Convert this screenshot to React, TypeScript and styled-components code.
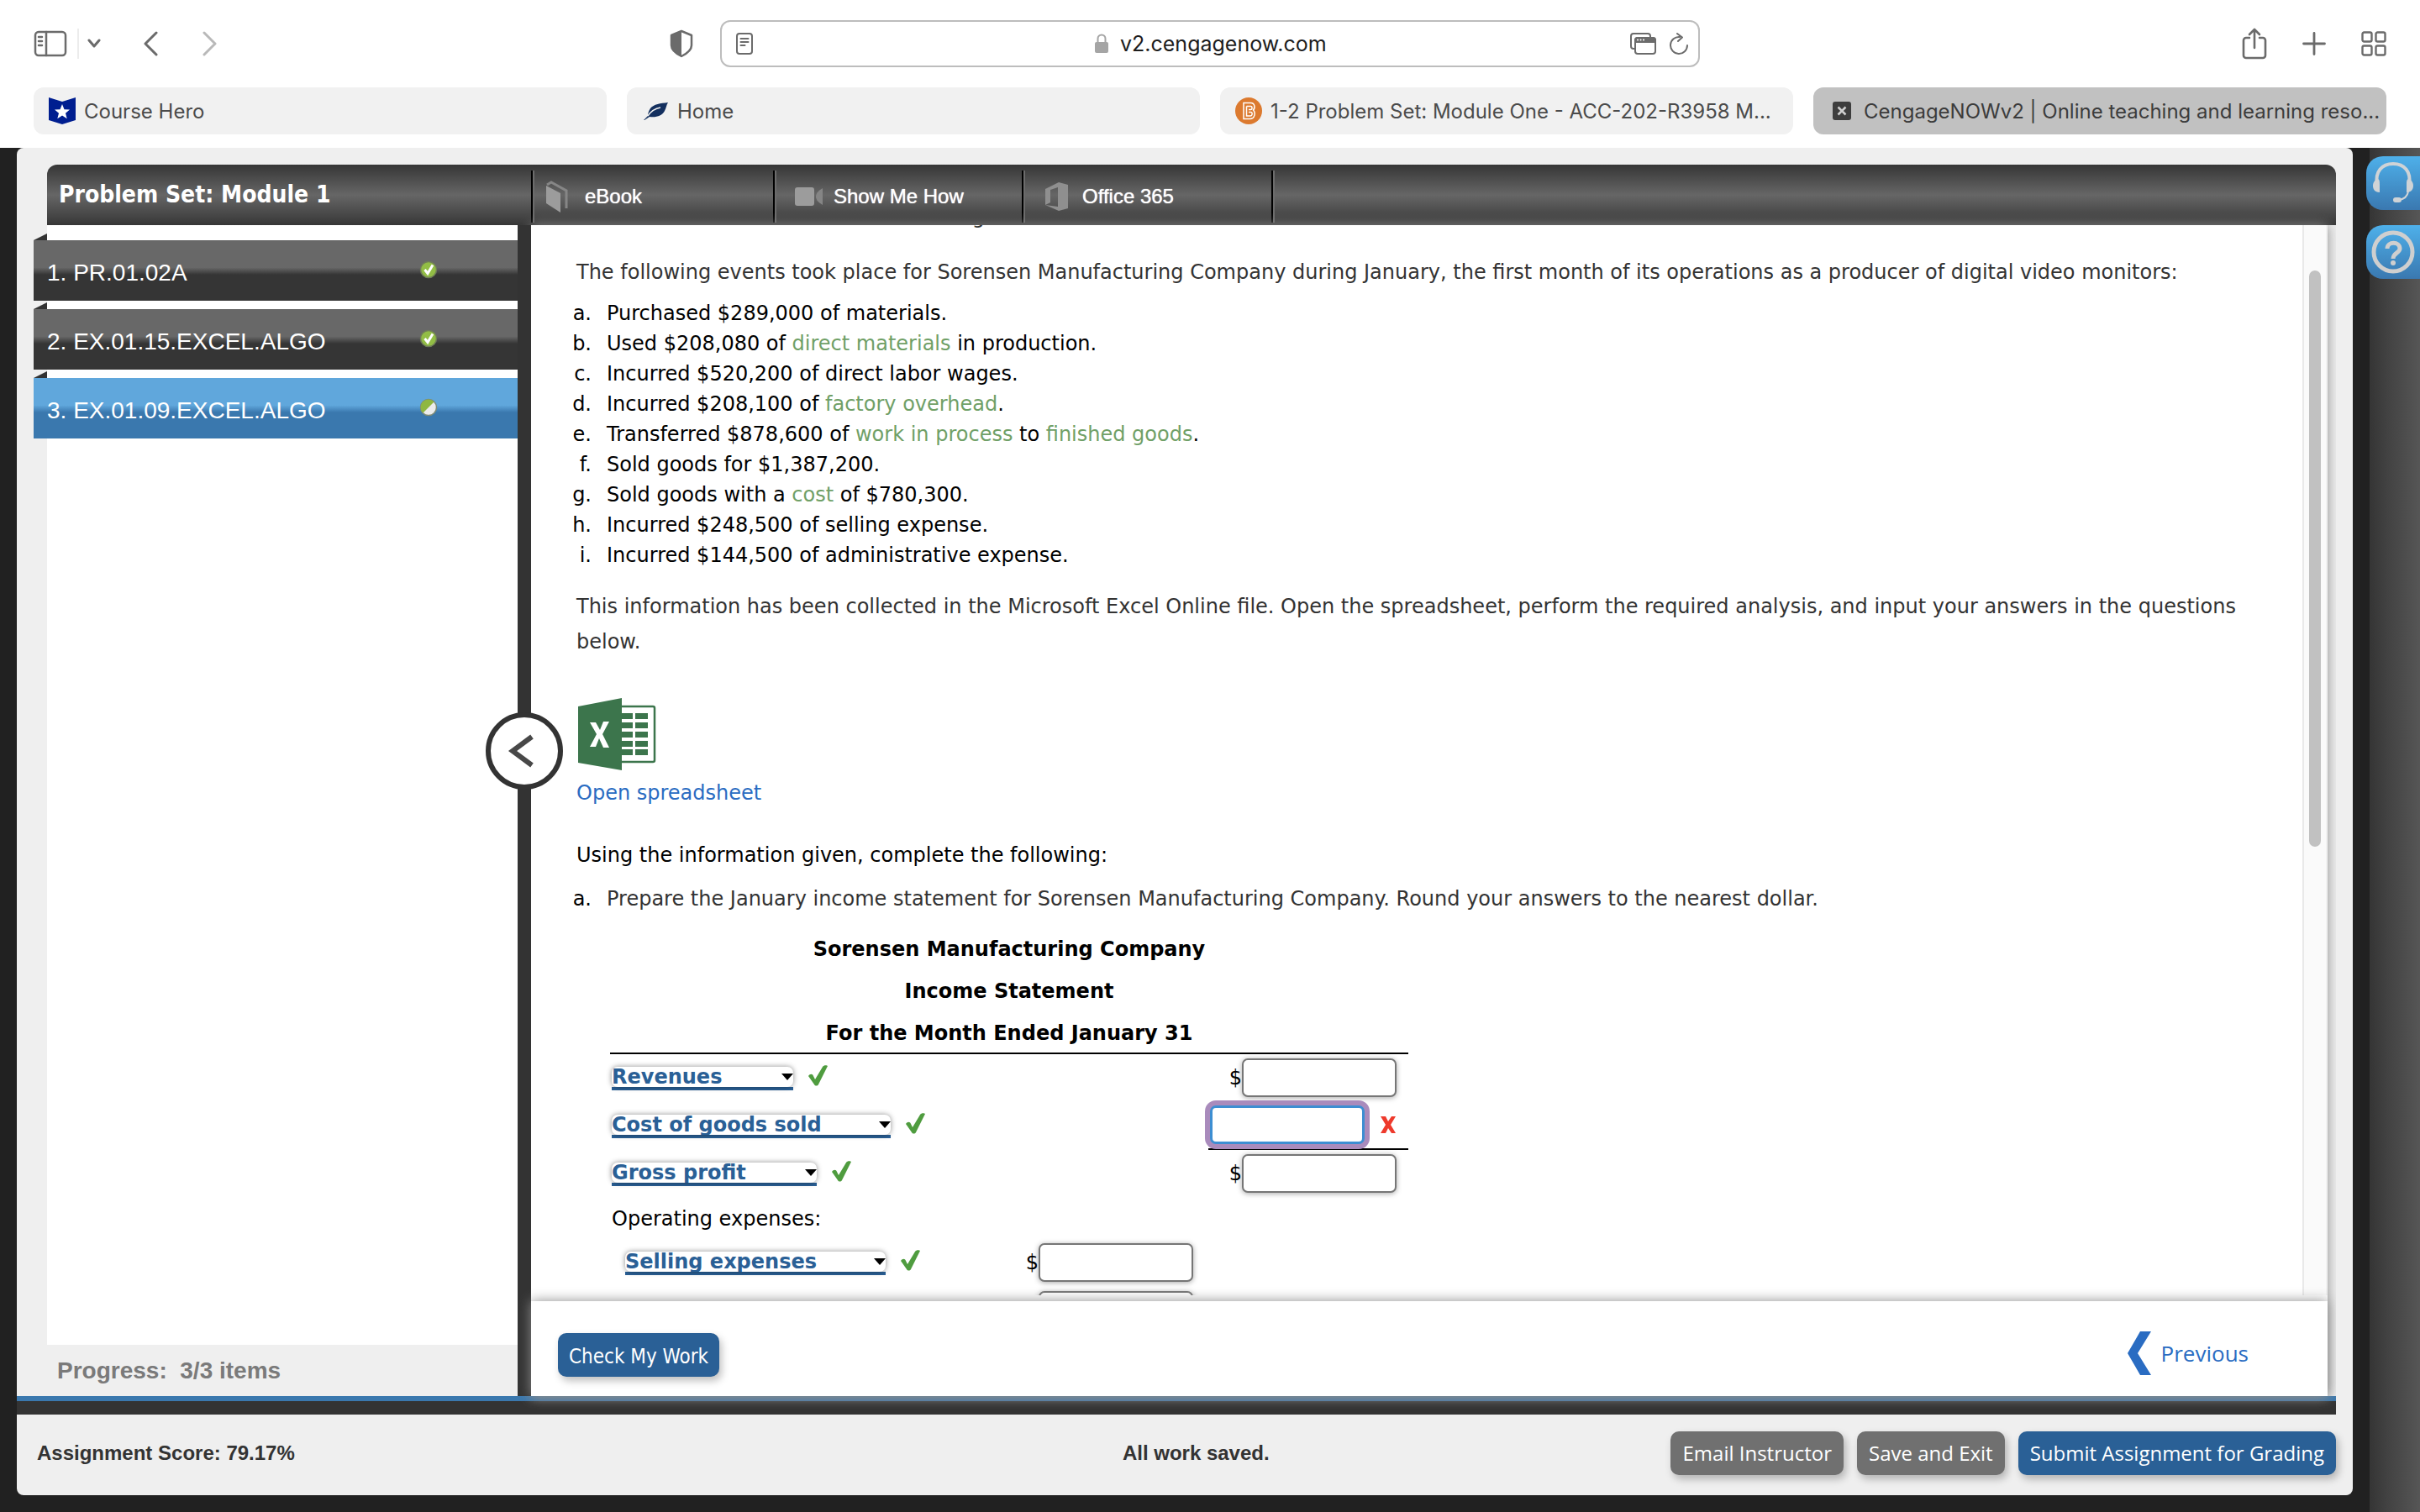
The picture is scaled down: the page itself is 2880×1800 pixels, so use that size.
import React from "react";
import styled, { createGlobalStyle, css } from "styled-components";

const GlobalStyle = createGlobalStyle`
  *, *::before, *::after { box-sizing: border-box; }
  body { margin: 0; background: #ffffff; }
  button, input, select { font: inherit; }
`;

const arial = `"Liberation Sans", Arial, sans-serif`;
const verdana = `"DejaVu Sans", Verdana, sans-serif`;
const tahoma = `"DejaVu Sans Condensed", Tahoma, sans-serif`;
const openSans = `"Open Sans", sans-serif`;
const inter = `Inter, sans-serif`;

/* ---------- Browser chrome ---------- */

const Page = styled.div`
  display: flex;
  flex-direction: column;
  height: 100vh;
  overflow: hidden;
  font-family: ${arial};
  font-size: 24px;
  color: #000;
`;

const Browser = styled.header`
  padding: 24px 40px 16px;
  background: #fff;
  font-family: ${inter};
`;

const Toolbar = styled.div`
  display: grid;
  grid-template-columns: 1fr minmax(0, 1166px) 1fr;
  align-items: center;
`;

const ToolGroup = styled.div<{ $end?: boolean }>`
  display: flex;
  align-items: center;
  justify-content: ${(p) => (p.$end ? "flex-end" : "flex-start")};
  gap: ${(p) => (p.$end ? "42px" : "0")};
  padding-right: ${(p) => (p.$end ? "0" : "32px")};
`;

const ToolButton = styled.button<{ $left?: number }>`
  display: flex;
  padding: 0;
  margin-left: ${(p) => p.$left || 0}px;
  border: 0;
  background: none;
  color: #6b6b6b;
  &:disabled { color: #b9b9b9; }
`;

const ToolDivider = styled.span`
  width: 2px;
  height: 36px;
  margin-left: 12px;
  background: #ececec;
`;

const Spacer = styled.span`
  flex: 1;
`;

const AddressBar = styled.div`
  display: flex;
  align-items: center;
  height: 56px;
  padding: 0 12px 0 17px;
  border: 2px solid #bdbdbd;
  border-radius: 12px;
`;

const AddressCenter = styled.label`
  display: flex;
  flex: 1;
  align-items: center;
  justify-content: center;
  gap: 14px;
  padding-left: 52px;
`;

const AddressInput = styled.input`
  width: 252px;
  padding: 0;
  border: 0;
  outline: 0;
  background: none;
  font-size: 25px;
  color: #1d1d1d;
`;

const TabStrip = styled.nav`
  display: grid;
  grid-template-columns: repeat(4, minmax(0, 1fr));
  gap: 24px;
  margin-top: 24px;
`;

const Tab = styled.a<{ $active?: boolean }>`
  display: flex;
  align-items: center;
  gap: 10px;
  height: 56px;
  padding: 0 8px 0 18px;
  border-radius: 12px;
  background: ${(p) => (p.$active ? "#c1c1c1" : "#f1f1f1")};
  color: ${(p) => (p.$active ? "#3c3c3c" : "#4b4b4b")};
  text-decoration: none;
  white-space: nowrap;
  overflow: hidden;
  svg { flex: none; }
`;

/* ---------- Application frame ---------- */

const Workspace = styled.div`
  display: flex;
  flex: 1;
  min-height: 0;
`;

const Frame = styled.div`
  display: flex;
  flex: 1;
  min-width: 0;
  padding: 0 20px 20px;
  background: #212121;
`;

const Panel = styled.div`
  display: flex;
  flex-direction: column;
  flex: 1;
  min-width: 0;
  padding: 20px 20px 0 0;
  border-radius: 8px;
  background: #efefef;
`;

const HeaderBar = styled.div`
  display: flex;
  height: 72px;
  margin-left: 36px;
  border-radius: 12px 12px 0 0;
  background: linear-gradient(#363636, #666 50%, #373737);
  color: #fff;
`;

const Title = styled.h1`
  width: 576px;
  margin: 0;
  padding-left: 14px;
  font: 700 28px/72px ${tahoma};
`;

const HeaderTool = styled.button<{ $width: number; $indent: number }>`
  display: flex;
  align-items: center;
  gap: 12px;
  width: ${(p) => p.$width}px;
  margin: 7px 0 3px;
  padding: 0 0 0 ${(p) => p.$indent}px;
  border: 0;
  border-left: 2px solid #000;
  box-shadow: inset 2px 0 #6c6c6c;
  background: none;
  color: #fff;
  text-shadow: 0 0 1px #fff;
`;

const HeaderEnd = styled.span`
  width: 4px;
  margin: 7px 0 3px;
  border-left: 2px solid #000;
  border-right: 2px solid #6c6c6c;
`;

const Main = styled.main`
  display: flex;
  flex: 1;
  min-height: 0;
  clip-path: inset(-14px 0 -22px 0);
`;

const Sidebar = styled.aside`
  display: flex;
  flex-direction: column;
  width: 596px;
  padding-left: 36px;
`;

const ItemList = styled.ul`
  display: flex;
  flex-direction: column;
  flex: 1;
  gap: 2px;
  margin: 0;
  padding: 10px 0 0;
  list-style: none;
  background: #fff;
`;

const Fold = styled.svg`
  display: block;
`;

const ItemRow = styled.li`
  margin-left: -16px;
`;

const ItemLink = styled.a<{ $active?: boolean }>`
  display: flex;
  align-items: center;
  justify-content: space-between;
  height: 72px;
  padding: 0 95px 2px 16px;
  font-size: 28px;
  line-height: 32px;
  color: #fff;
  text-decoration: none;
  background: ${(p) =>
    p.$active
      ? "linear-gradient(#60a7dc 45%, #3a78ae 57%)"
      : "linear-gradient(#686868 45%, #353535 57%)"};
  span { padding-top: 8px; }
`;

const Progress = styled.div`
  height: 61px;
  padding-left: 12px;
  background: #efefef;
  color: #7a7a7a;
  font-weight: 700;
  font-size: 28px;
  line-height: 61px;
  white-space: pre;
`;

const Divider = styled.div`
  position: relative;
  z-index: 1;
  width: 16px;
  background: #333;
`;

const CollapseButton = styled.button`
  position: absolute;
  top: 580px;
  left: -38px;
  display: flex;
  align-items: center;
  justify-content: center;
  width: 92px;
  height: 92px;
  padding: 0 8px 0 0;
  border: 6px solid #333;
  border-radius: 50%;
  background: #fff;
`;

const Content = styled.section`
  display: flex;
  flex-direction: column;
  flex: 1;
  min-width: 0;
  margin-right: 10px;
  background: #fff;
  box-shadow: 0 0 14px #8c8c8c;
`;

const ScrollRow = styled.div`
  display: flex;
  flex: 1;
  min-height: 0;
  padding-bottom: 7px;
`;

const Scroller = styled.div`
  flex: 1;
  min-width: 0;
  overflow: hidden;
  padding: 0 40px 0 54px;
  font-family: ${verdana};
  font-size: 24px;
  line-height: 42px;
`;

const ScrollTrack = styled.div`
  width: 30px;
  padding: 54px 6px 0;
  border-left: 2px solid #e9e9e9;
  border-right: 2px solid #f1f1f1;
  background: #fafafa;
`;

const ScrollThumb = styled.div`
  height: 686px;
  border-radius: 8px;
  background: #c1c1c1;
`;

/* ---------- Problem text ---------- */

const Problem = styled.article`
  margin-top: -31px;
`;

const Paragraph = styled.p<{ $dark?: boolean; $gap?: number }>`
  margin: 0 0 ${(p) => p.$gap ?? 24}px;
  color: ${(p) => (p.$dark ? "#000" : "#333")};
`;

const Steps = styled.ol<{ $lineHeight?: number; $gap?: number }>`
  margin: 0 0 ${(p) => p.$gap ?? 0}px -6px;
  padding: 0;
  list-style: none;
  line-height: ${(p) => p.$lineHeight ?? 36}px;
`;

const Step = styled.li`
  display: grid;
  grid-template-columns: 24px 1fr;
  gap: 18px;
`;

const Marker = styled.span`
  text-align: right;
`;

const Term = styled.a`
  color: #70a067;
  text-decoration: none;
`;

const Muted = styled.span`
  color: #333;
`;

const SheetLink = styled.a`
  display: flex;
  flex-direction: column;
  align-items: flex-start;
  gap: 6px;
  margin: 46px 0 32px;
  color: #2a6cc2;
  text-decoration: none;
`;

/* ---------- Income statement ---------- */

const Statement = styled.table`
  width: 950px;
  margin: 12px 0 0 40px;
  border-collapse: collapse;
  table-layout: fixed;
`;

const Col = styled.col<{ $width: number }>`
  width: ${(p) => p.$width}px;
`;

const TitleCell = styled.th<{ $rule?: boolean }>`
  height: 50px;
  padding: 4px 0 0;
  line-height: 46px;
  border-bottom: ${(p) => (p.$rule ? "2px solid #000" : "0")};
`;

const LabelCell = styled.th<{ $indent?: boolean; $text?: boolean }>`
  height: ${(p) => (p.$text ? 49 : 57)}px;
  padding: ${(p) => (p.$text ? 2 : 0)}px 0 0 ${(p) => (p.$indent ? 18 : 2)}px;
  text-align: left;
  font-weight: 400;
  line-height: 46px;
`;

const AmountCell = styled.td<{ $rule?: boolean; $right: number }>`
  padding: 0 ${(p) => p.$right}px 0 0;
  border-bottom: ${(p) => (p.$rule ? "2px solid #000" : "0")};
`;

const AmountField = styled.label`
  display: flex;
  align-items: center;
  justify-content: flex-end;
`;

const AmountInput = styled.input<{ $focus?: boolean }>`
  width: 184px;
  height: 46px;
  padding: 0 8px;
  outline: 0;
  border: 2px solid #767676;
  border-radius: 7px;
  background: #fff;
  box-shadow: 0 1px 6px rgba(0, 0, 0, 0.35);
  ${(p) =>
    p.$focus &&
    css`
      margin-right: 18px;
      border: 3px solid #3d8ed2;
      box-shadow: 0 0 0 6px #a98bbc;
    `}
`;

const ChoiceRow = styled.div`
  display: flex;
  align-items: flex-start;
  gap: 18px;
`;

const SelectBox = styled.span<{ $width: number }>`
  display: grid;
  align-items: center;
  width: ${(p) => p.$width}px;
  margin-top: 2px;
  border-bottom: 4px solid #2a6096;
  svg { grid-area: 1 / 1; justify-self: end; pointer-events: none; }
`;

const Select = styled.select`
  grid-area: 1 / 1;
  width: 100%;
  height: 24px;
  padding: 0;
  appearance: none;
  border: 0;
  border-radius: 7px;
  outline: 0;
  background: #fff;
  box-shadow: 0 0 6px rgba(0, 0, 0, 0.45);
  color: #2a6096;
  font-weight: 700;
  line-height: 24px;
`;

/* ---------- Bottom bars ---------- */

const ActionBar = styled.div`
  position: relative;
  z-index: 2;
  display: flex;
  align-items: center;
  justify-content: space-between;
  height: 113px;
  padding: 38px 94px 23px 32px;
  background: #fff;
  box-shadow: 0 0 14px #8c8c8c;
`;

const PushButton = styled.button<{ $primary?: boolean; $face?: string }>`
  height: 52px;
  padding: ${(p) => (p.$face ? "4px 13px 0" : "0 14px")};
  border: 0;
  border-radius: 10px;
  background: ${(p) => (p.$primary ? "#2a6096" : "#707070")};
  box-shadow: 3px 5px 10px rgba(0, 0, 0, 0.25);
  color: #fff;
  font-family: ${(p) => p.$face || openSans};
  font-size: 24px;
  font-weight: 400;
  line-height: 48px;
  white-space: nowrap;
`;

const PreviousLink = styled.a`
  display: flex;
  align-items: center;
  gap: 12px;
  padding-bottom: 4px;
  color: #2a6cc2;
  font: 400 26px/40px ${openSans};
  text-decoration: none;
`;

const BaseLine = styled.div`
  height: 22px;
  background: linear-gradient(#3a78ae 6px, #333 6px);
`;

const Footer = styled.footer`
  display: grid;
  grid-template-columns: 47% auto 1fr;
  gap: 6px;
  align-items: center;
  height: 96px;
  padding: 0 0 4px 24px;
  color: #333;
  font-weight: 700;
`;

const FooterActions = styled.div`
  display: flex;
  justify-content: flex-end;
  gap: 16px;
`;

const SideRail = styled.aside`
  display: flex;
  flex-direction: column;
  gap: 18px;
  width: 60px;
  padding-top: 10px;
  background: linear-gradient(90deg, #353535, #424242 35%, #565656);
`;

const RailButton = styled.button`
  display: flex;
  align-items: center;
  justify-content: center;
  width: 64px;
  height: 64px;
  margin-left: -4px;
  padding: 0;
  border: 0;
  border-radius: 20px 0 0 20px;
  background: linear-gradient(#4eb0ea, #3a78b0);
`;

/* ---------- Drawings ---------- */

const line = { fill: "none", stroke: "currentColor", strokeLinecap: "round", strokeLinejoin: "round" } as const;

const SidebarIcon = () => (
  <svg width="40" height="32" viewBox="0 0 40 32" {...line} strokeWidth="2.5">
    <rect x="2" y="2" width="36" height="28" rx="4" />
    <path d="M15 2v28M6 8h4M6 13h4M6 18h4" />
  </svg>
);
const SmallChevron = () => (
  <svg width="16" height="12" viewBox="0 0 16 12" {...line} strokeWidth="3"><path d="M2 2l6 7 6-7" /></svg>
);
const Arrow = ({ flip }: { flip?: boolean }) => (
  <svg width="18" height="30" viewBox="0 0 18 30" {...line} strokeWidth="3">
    <path d={flip ? "M2 2l13 13L2 28" : "M16 2L3 15l13 13"} />
  </svg>
);
const ShieldIcon = () => (
  <svg width="28" height="34" viewBox="0 0 28 34">
    <path d="M14 2l12 5v12c0 6-6 10-12 13C8 29 2 25 2 19V7z" fill="none" stroke="currentColor" strokeWidth="2.5" strokeLinejoin="round" />
    <path d="M14 2v30C8 29 2 25 2 19V7z" fill="currentColor" />
  </svg>
);
const ReaderIcon = () => (
  <svg width="20" height="26" viewBox="0 0 20 26" {...line} strokeWidth="2">
    <rect x="1" y="1" width="18" height="24" rx="3" /><path d="M5.500 7h9M5.500 11h9M5.500 15h5" />
  </svg>
);
const LockIcon = () => (
  <svg width="16" height="24" viewBox="0 0 16 24">
    <path d="M3.500 11V6a4.500 4.500 0 0 1 9 0v5" fill="none" stroke="#a5a5a5" strokeWidth="2" />
    <rect y="10" width="16" height="13" rx="2" fill="#a5a5a5" />
  </svg>
);
const WindowsIcon = () => (
  <svg width="31" height="26" viewBox="0 0 31 26" {...line} strokeWidth="2">
    <path d="M6 19H4a3 3 0 0 1-3-3V4a3 3 0 0 1 3-3h17a3 3 0 0 1 3 3v2" />
    <rect x="6" y="6" width="24" height="19" rx="3" />
    <path d="M6 11V9a3 3 0 0 1 3-3h18a3 3 0 0 1 3 3v2z" fill="currentColor" />
    <path d="M9 8.500h.1M12.500 8.500h.1M16 8.500h.1" stroke="#fff" />
  </svg>
);
const ReloadIcon = () => (
  <svg width="22" height="26" viewBox="0 0 22 26" {...line} strokeWidth="2">
    <path d="M12 5a10 10 0 1 0 9 10M9 1l6 4.500-5 4.500" />
  </svg>
);
const ShareIcon = () => (
  <svg width="30" height="38" viewBox="0 0 30 38" {...line} strokeWidth="2.600">
    <path d="M9 12H5a3 3 0 0 0-3 3v18a3 3 0 0 0 3 3h20a3 3 0 0 0 3-3V15a3 3 0 0 0-3-3h-4M15 24V2M9 8l6-6 6 6" />
  </svg>
);
const PlusIcon = () => (
  <svg width="28" height="28" viewBox="0 0 28 28" {...line} strokeWidth="2.800"><path d="M14 1.500v25M1.500 14h25" /></svg>
);
const GridIcon = () => (
  <svg width="30" height="30" viewBox="0 0 30 30" {...line} strokeWidth="2.400">
    <rect x="1.500" y="1.500" width="11" height="11" rx="2" /><rect x="17.500" y="1.500" width="11" height="11" rx="2" />
    <rect x="1.500" y="17.500" width="11" height="11" rx="2" /><rect x="17.500" y="17.500" width="11" height="11" rx="2" />
  </svg>
);

const HeroIcon = () => (
  <svg width="32" height="32" viewBox="0 0 32 32">
    <path d="M0 0l16 5L32 0v27l-16 5-16-5z" fill="#001e90" />
    <path d="M16 8l2.500 6.200 6.500.4-5 4.200 1.700 6.400L16 21.600l-5.700 3.600 1.700-6.400-5-4.200 6.500-.4z" fill="#fff" />
  </svg>
);
const FeatherIcon = () => (
  <svg width="32" height="32" viewBox="0 0 32 32">
    <path d="M31 6c-9 1-17 2-21 7-2 3-3 6-3 9l-5 5 1 0 6-4c8 1 15-1 18-7 2-4 2-7 4-10z" fill="#14305f" />
    <path d="M7 22c4-6 9-9 15-10" fill="none" stroke="#f1f1f1" strokeWidth="1.500" />
  </svg>
);
const BrightspaceIcon = () => (
  <svg width="32" height="32" viewBox="0 0 32 32">
    <circle cx="16" cy="16" r="16" fill="#dc7a2f" />
    <path d="M10 6.500h8.500c5 0 5.500 6 3 8.500 3 3 2 10.500-4 10.500H10zM13.500 10.500h5c2 0 2 4 0 4H16M16 17.500h2.500c2.500 0 2 4.500-.5 4.500h-4.500V10.500" fill="none" stroke="#fff" strokeWidth="1.500" />
  </svg>
);
const CloseTabIcon = () => (
  <svg width="32" height="32" viewBox="0 0 32 32">
    <rect x="5" y="5" width="22" height="22" rx="3" fill="#3d3d3d" />
    <path d="M11.500 11.500l9 9M20.500 11.500l-9 9" stroke="#cfcfcf" strokeWidth="2.500" />
  </svg>
);

const BookIcon = () => (
  <svg width="36" height="38" viewBox="0 0 36 38">
    <path d="M2 6l17 9v23L2 27z" fill="#9c9c9c" />
    <path d="M3 5l5-3 18 10v21" fill="none" stroke="#868686" strokeWidth="3" />
  </svg>
);
const CameraIcon = () => (
  <svg width="36" height="38" viewBox="0 0 36 38">
    <rect x="2" y="8" width="23" height="22" rx="3" fill="#9c9c9c" />
    <path d="M35 9v20c-5-3-8-6-8-10s3-7 8-10z" fill="#858585" />
  </svg>
);
const OfficeIcon = () => (
  <svg width="36" height="38" viewBox="0 0 36 38">
    <path d="M4 10l16-8 11 3v28l-11 3L4 29l15 2V8l-9 3v15l-6 3z" fill="#8f8f8f" />
  </svg>
);

const DoneIcon = () => (
  <svg width="22" height="22" viewBox="0 0 22 22">
    <circle cx="11" cy="11" r="9.500" fill="#92bd45" stroke="#6f7d58" strokeWidth="1.500" />
    <path d="M6.500 11l3.500 4.500L16 5.500" fill="none" stroke="#fff" strokeWidth="3" />
  </svg>
);
const PartialIcon = () => (
  <svg width="22" height="22" viewBox="0 0 22 22">
    <circle cx="11" cy="11" r="9.500" fill="#ececec" stroke="#7d8a75" strokeWidth="1.500" />
    <path d="M17.500 4.500A9.200 9.200 0 1 0 4.500 17.500z" fill="#8fb740" />
  </svg>
);

const ExcelIcon = () => (
  <svg width="96" height="86" viewBox="0 0 96 86">
    <rect x="50" y="10" width="43" height="66" rx="2" fill="#fff" stroke="#3c754c" strokeWidth="2.500" />
    <g fill="#3c754c">
      {[18, 29, 40, 51, 61].map((y) => (
        <React.Fragment key={y}>
          <rect x="54" y={y} width="13" height="7" /><rect x="70" y={y} width="15" height="7" />
        </React.Fragment>
      ))}
    </g>
    <path d="M2 10L54 0v86L2 77z" fill="#3c754c" />
    <path d="M16 29l7 0 5 9 4-10 7 0-8 15 8 16-7 0-5-11-4 10-7 0 8-15z" fill="#fff" />
  </svg>
);

const CollapseArrow = () => (
  <svg width="32" height="40" viewBox="0 0 32 40" fill="none" stroke="#484848" strokeWidth="6"><path d="M29 3L6 20l23 17" /></svg>
);
const PreviousArrow = () => (
  <svg width="28" height="52" viewBox="0 0 28 52"><path d="M15 0h13L12 26l16 26H15L0 26z" fill="#2a6cc2" /></svg>
);
const CheckMark = () => (
  <svg width="24" height="26" viewBox="0 0 24 26"><path d="M0 13c2-3 5-3 6 0l2 4L17 2c1-2 5-2 6-1L12 23c-1 2-4 2-5 0z" fill="#4f9c3f" /></svg>
);
const WrongMark = () => (
  <svg width="20" height="22" viewBox="0 0 20 22">
    <path d="M1 1h6l3 6 4-6h5l-6 10 6 10h-5l-4-6-3 6H1l6-10z" fill="#ee3a2c" />
  </svg>
);
const DropArrow = () => (
  <svg width="14" height="8" viewBox="0 0 14 8"><path d="M0 0h14L7 8z" fill="#000" /></svg>
);
const HeadsetIcon = () => (
  <svg width="50" height="52" viewBox="0 0 50 52" fill="none" stroke="#cfd3d6">
    <path d="M6 28C3 12 12 3 25 3s22 9 19 25" strokeWidth="4" />
    <path d="M4.500 22c4-2 4.500 0 4.500 6v9c-6 0-8-4-8-8 0-3 1-5 3.500-7zM45.500 22c-4-2-4.500 0-4.500 6v9c6 0 8-4 8-8 0-3-1-5-3.500-7z" fill="#cfd3d6" stroke="none" />
    <path d="M43 36c-1 6-5 9-11 10" strokeWidth="2" /><rect x="25" y="43" width="10" height="6" rx="3" fill="#cfd3d6" stroke="none" />
  </svg>
);
const HelpIcon = () => (
  <svg width="52" height="52" viewBox="0 0 52 52" fill="none" stroke="#cfcfcf">
    <circle cx="26" cy="26" r="23" strokeWidth="5" />
    <path d="M19 22c0-9 15-9 15 0 0 5-8 5-8 12" strokeWidth="5" /><circle cx="26" cy="39" r="3" fill="#cfcfcf" stroke="none" />
  </svg>
);

/* ---------- Composition ---------- */

const tabs = [
  { label: "Course Hero", icon: <HeroIcon /> },
  { label: "Home", icon: <FeatherIcon /> },
  { label: "1-2 Problem Set: Module One - ACC-202-R3958 M...", icon: <BrightspaceIcon /> },
  { label: "CengageNOWv2 | Online teaching and learning reso...", icon: <CloseTabIcon />, active: true },
];

const tools = [
  { label: "eBook", icon: <BookIcon />, width: 288, indent: 14 },
  { label: "Show Me How", icon: <CameraIcon />, width: 296, indent: 22 },
  { label: "Office 365", icon: <OfficeIcon />, width: 297, indent: 22 },
];

const items = [
  { label: "1. PR.01.02A", icon: <DoneIcon /> },
  { label: "2. EX.01.15.EXCEL.ALGO", icon: <DoneIcon /> },
  { label: "3. EX.01.09.EXCEL.ALGO", icon: <PartialIcon />, active: true },
];

const events: React.ReactNode[] = [
  <>Purchased $289,000 of materials.</>,
  <>Used $208,080 of <Term href="#">direct materials</Term> in production.</>,
  <>Incurred $520,200 of direct labor wages.</>,
  <>Incurred $208,100 of <Term href="#">factory overhead</Term>.</>,
  <>Transferred $878,600 of <Term href="#">work in process</Term> to <Term href="#">finished goods</Term>.</>,
  <>Sold goods for $1,387,200.</>,
  <>Sold goods with a <Term href="#">cost</Term> of $780,300.</>,
  <>Incurred $248,500 of selling expense.</>,
  <>Incurred $144,500 of administrative expense.</>,
];

const Choice = ({ value, width, name }: { value: string; width: number; name: string }) => (
  <ChoiceRow>
    <SelectBox $width={width}>
      <Select aria-label={name} defaultValue={value}><option>{value}</option></Select>
      <DropArrow />
    </SelectBox>
    <CheckMark />
  </ChoiceRow>
);

const Amount = ({ name, dollar, wrong }: { name: string; dollar?: boolean; wrong?: boolean }) => (
  <AmountField>
    {dollar && "$"}
    <AmountInput aria-label={name} $focus={wrong} />
    {wrong && <WrongMark />}
  </AmountField>
);

export default function App() {
  return (
    <Page>
      <GlobalStyle />
      <Browser>
        <Toolbar>
          <ToolGroup>
            <ToolButton aria-label="Sidebar"><SidebarIcon /></ToolButton>
            <ToolDivider />
            <ToolButton aria-label="Tab groups" $left={10}><SmallChevron /></ToolButton>
            <ToolButton aria-label="Back" $left={50}><Arrow /></ToolButton>
            <ToolButton aria-label="Forward" $left={53} disabled><Arrow flip /></ToolButton>
            <Spacer />
            <ToolButton aria-label="Privacy report"><ShieldIcon /></ToolButton>
          </ToolGroup>
          <AddressBar>
            <ToolButton aria-label="Reader"><ReaderIcon /></ToolButton>
            <AddressCenter>
              <LockIcon />
              <AddressInput aria-label="Address" defaultValue="v2.cengagenow.com" />
            </AddressCenter>
            <ToolButton aria-label="Windows"><WindowsIcon /></ToolButton>
            <ToolButton aria-label="Reload" $left={16}><ReloadIcon /></ToolButton>
          </AddressBar>
          <ToolGroup $end>
            <ToolButton aria-label="Share"><ShareIcon /></ToolButton>
            <ToolButton aria-label="New tab"><PlusIcon /></ToolButton>
            <ToolButton aria-label="Tab overview"><GridIcon /></ToolButton>
          </ToolGroup>
        </Toolbar>
        <TabStrip>
          {tabs.map((t) => (
            <Tab key={t.label} href="#" $active={t.active}>{t.icon}{t.label}</Tab>
          ))}
        </TabStrip>
      </Browser>

      <Workspace>
        <Frame>
          <Panel>
            <HeaderBar>
              <Title>Problem Set: Module 1</Title>
              {tools.map((t) => (
                <HeaderTool key={t.label} $width={t.width} $indent={t.indent}>{t.icon}{t.label}</HeaderTool>
              ))}
              <HeaderEnd />
            </HeaderBar>

            <Main>
              <Sidebar>
                <ItemList>
                  {items.map((i) => (
                    <ItemRow key={i.label}>
                      <Fold width="16" height="8" viewBox="0 0 16 8"><path d="M0 8L16 0v8z" fill="#333" /></Fold>
                      <ItemLink href="#" $active={i.active}><span>{i.label}</span>{i.icon}</ItemLink>
                    </ItemRow>
                  ))}
                </ItemList>
                <Progress>{"Progress:  3/3 items"}</Progress>
              </Sidebar>

              <Divider>
                <CollapseButton aria-label="Collapse list"><CollapseArrow /></CollapseButton>
              </Divider>

              <Content>
                <ScrollRow>
                  <Scroller>
                    <Problem>
                      <Paragraph>Financial Statements of a Manufacturing Firm</Paragraph>
                      <Paragraph $gap={10}>
                        The following events took place for Sorensen Manufacturing Company during January, the first
                        month of its operations as a producer of digital video monitors:
                      </Paragraph>
                      <Steps $gap={22}>
                        {events.map((e, i) => (
                          <Step key={i}><Marker>{"abcdefghi"[i]}.</Marker><span>{e}</span></Step>
                        ))}
                      </Steps>
                      <Paragraph $gap={0}>
                        This information has been collected in the Microsoft Excel Online file. Open the spreadsheet,
                        perform the required analysis, and input your answers in the questions below.
                      </Paragraph>
                      <SheetLink href="#"><ExcelIcon />Open spreadsheet</SheetLink>
                      <Paragraph $dark $gap={10}>Using the information given, complete the following:</Paragraph>
                      <Steps $lineHeight={42}>
                        <Step>
                          <Marker>a.</Marker>
                          <Muted>
                            Prepare the January income statement for Sorensen Manufacturing Company. Round your answers
                            to the nearest dollar.
                          </Muted>
                        </Step>
                      </Steps>
                      <Statement>
                        <colgroup><Col $width={494} /><Col $width={218} /><Col $width={238} /></colgroup>
                        <thead>
                          <tr><TitleCell colSpan={3}>Sorensen Manufacturing Company</TitleCell></tr>
                          <tr><TitleCell colSpan={3}>Income Statement</TitleCell></tr>
                          <tr><TitleCell colSpan={3} $rule>For the Month Ended January 31</TitleCell></tr>
                        </thead>
                        <tbody>
                          <tr>
                            <LabelCell scope="row"><Choice name="Line 1" value="Revenues" width={216} /></LabelCell>
                            <td />
                            <AmountCell $right={14}><Amount name="Revenues amount" dollar /></AmountCell>
                          </tr>
                          <tr>
                            <LabelCell scope="row"><Choice name="Line 2" value="Cost of goods sold" width={332} /></LabelCell>
                            <td />
                            <AmountCell $right={14} $rule><Amount name="Cost of goods sold amount" wrong /></AmountCell>
                          </tr>
                          <tr>
                            <LabelCell scope="row"><Choice name="Line 3" value="Gross profit" width={244} /></LabelCell>
                            <td />
                            <AmountCell $right={14}><Amount name="Gross profit amount" dollar /></AmountCell>
                          </tr>
                          <tr>
                            <LabelCell scope="row" $text>Operating expenses:</LabelCell>
                            <td />
                            <td />
                          </tr>
                          <tr>
                            <LabelCell scope="row" $indent><Choice name="Line 4" value="Selling expenses" width={310} /></LabelCell>
                            <AmountCell $right={18}><Amount name="Selling expenses amount" dollar /></AmountCell>
                            <td />
                          </tr>
                          <tr>
                            <LabelCell scope="row" $indent />
                            <AmountCell $right={18}><Amount name="Administrative expenses amount" /></AmountCell>
                            <td />
                          </tr>
                        </tbody>
                      </Statement>
                    </Problem>
                  </Scroller>
                  <ScrollTrack><ScrollThumb /></ScrollTrack>
                </ScrollRow>
                <ActionBar>
                  <PushButton $primary $face={tahoma}>Check My Work</PushButton>
                  <PreviousLink href="#"><PreviousArrow />Previous</PreviousLink>
                </ActionBar>
              </Content>
            </Main>
            <BaseLine />
            <Footer>
              <span>Assignment Score: 79.17%</span>
              <span>All work saved.</span>
              <FooterActions>
                <PushButton>Email Instructor</PushButton>
                <PushButton>Save and Exit</PushButton>
                <PushButton $primary>Submit Assignment for Grading</PushButton>
              </FooterActions>
            </Footer>
          </Panel>
        </Frame>
        <SideRail>
          <RailButton aria-label="Support"><HeadsetIcon /></RailButton>
          <RailButton aria-label="Help"><HelpIcon /></RailButton>
        </SideRail>
      </Workspace>
    </Page>
  );
}
